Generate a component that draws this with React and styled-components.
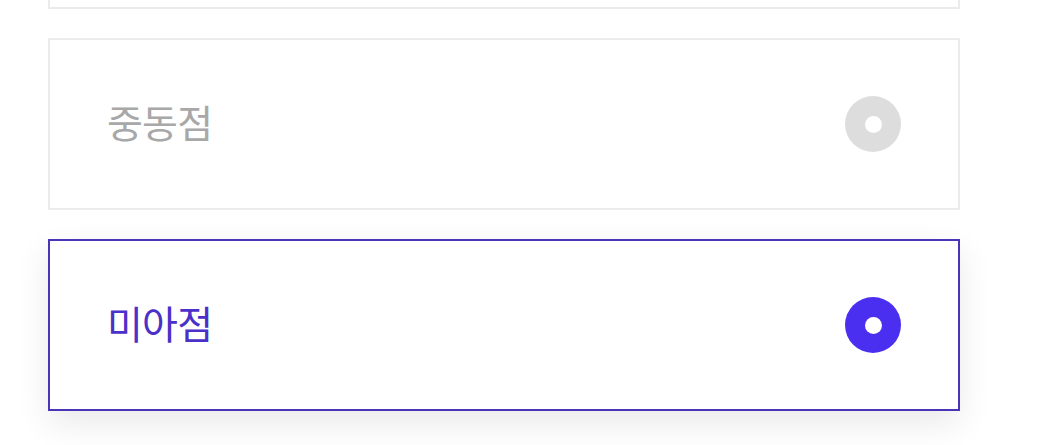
import React, { useState } from "react";
import styled, { createGlobalStyle } from "styled-components";

const Global = createGlobalStyle`
  html, body { margin: 0; padding: 0; background: #ffffff; overflow: hidden; }
  body { font-family: "Noto Sans CJK KR", "Noto Sans", sans-serif; }
`;

const Page = styled.div`
  width: 1043px;
  height: 445px;
  overflow: hidden;
  background: #ffffff;
`;

const List = styled.ul`
  list-style: none;
  margin: -163px 0 0 48px;
  padding: 0;
  width: 912px;
  display: flex;
  flex-direction: column;
  gap: 29px;
`;

const Card = styled.li`
  box-sizing: border-box;
  height: 172px;
  display: flex;
  align-items: center;
  justify-content: space-between;
  padding: 0 57px 0 57px;
  background: #ffffff;
  border: 2px solid ${(p) => (p.$active ? "#4a35b8" : "#ebebeb")};
  box-shadow: ${(p) => (p.$active ? "0 12px 32px rgba(0, 0, 0, 0.09)" : "none")};
  cursor: pointer;
`;

const Label = styled.span`
  font-family: "Noto Sans CJK KR", "Noto Sans", sans-serif;
  font-size: 39px;
  line-height: 1;
  padding-bottom: 6px;
  font-weight: 400;
  letter-spacing: -0.8px;
  color: ${(p) => (p.$active ? "#4b30c9" : "#a8a8a8")};
`;

const Radio = styled.span`
  width: 56px;
  height: 56px;
  border-radius: 50%;
  background: ${(p) => (p.$active ? "#4a2ff0" : "#dddddd")};
  display: flex;
  align-items: center;
  justify-content: center;
  &::after {
    content: "";
    width: 17px;
    height: 17px;
    border-radius: 50%;
    background: #ffffff;
  }
`;

const stores = ["", "중동점", "미아점"];

export default function App() {
  const [selected, setSelected] = useState(2);
  return (
    <Page>
      <Global />
      <List>
        {stores.map((name, i) => (
          <Card key={i} $active={selected === i} onClick={() => setSelected(i)}>
            <Label $active={selected === i}>{name}</Label>
            <Radio $active={selected === i} />
          </Card>
        ))}
      </List>
    </Page>
  );
}
